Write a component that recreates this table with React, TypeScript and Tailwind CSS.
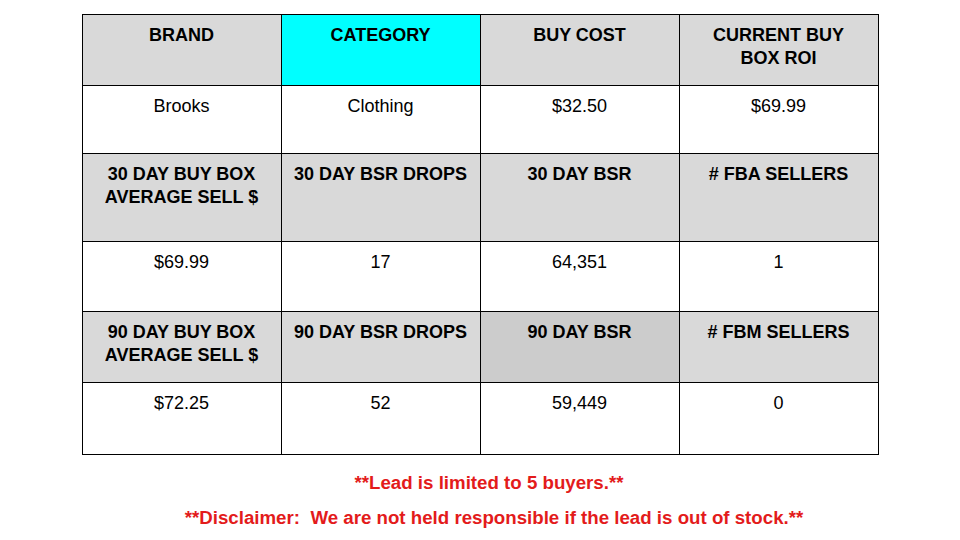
const font = { fontFamily: '"Liberation Sans", Arial, sans-serif' };

interface Cell {
  text: string;
  bg?: string;
}

const rows: { header: boolean; height: string; cells: Cell[] }[] = [
  {
    header: true,
    height: "h-[71px]",
    cells: [
      { text: "BRAND" },
      { text: "CATEGORY", bg: "bg-[#00ffff]" },
      { text: "BUY COST" },
      { text: "CURRENT BUY\nBOX ROI" },
    ],
  },
  {
    header: false,
    height: "h-[68px]",
    cells: [{ text: "Brooks" }, { text: "Clothing" }, { text: "$32.50" }, { text: "$69.99" }],
  },
  {
    header: true,
    height: "h-[88px]",
    cells: [
      { text: "30 DAY BUY BOX AVERAGE SELL $" },
      { text: "30 DAY BSR DROPS" },
      { text: "30 DAY BSR" },
      { text: "# FBA SELLERS" },
    ],
  },
  {
    header: false,
    height: "h-[70px]",
    cells: [{ text: "$69.99" }, { text: "17" }, { text: "64,351" }, { text: "1" }],
  },
  {
    header: true,
    height: "h-[71px]",
    cells: [
      { text: "90 DAY BUY BOX AVERAGE SELL $" },
      { text: "90 DAY BSR DROPS" },
      { text: "90 DAY BSR", bg: "bg-[#cccccc]" },
      { text: "# FBM SELLERS" },
    ],
  },
  {
    header: false,
    height: "h-[72px]",
    cells: [{ text: "$72.25" }, { text: "52" }, { text: "59,449" }, { text: "0" }],
  },
];

export default function App() {
  return (
    <div className="w-[960px] h-[540px] bg-white overflow-hidden" style={font}>
      <div className="pt-[14px] flex flex-col items-center">
        <table className="w-[797px] border-collapse table-fixed text-[18px] leading-[23px] text-black">
          <tbody>
            {rows.map((row, i) => (
              <tr key={i} className={row.height}>
                {row.cells.map((cell, j) => (
                  <td
                    key={j}
                    className={`border border-black align-top text-center px-[6px] pt-[9px] whitespace-pre-line ${
                      cell.bg ?? (row.header ? "bg-[#d9d9d9]" : "bg-white")
                    } ${row.header ? "font-bold" : "font-normal"}`}
                  >
                    {cell.text}
                  </td>
                ))}
              </tr>
            ))}
          </tbody>
        </table>
        <div className="mt-[16px] flex flex-col items-center gap-[12px] text-[#e31b1b] font-bold text-[18.7px] leading-[23px]">
          <p className="pl-[18px]">**Lead is limited to 5 buyers.**</p>
          <p className="pl-[28px] whitespace-pre">**Disclaimer:  We are not held responsible if the lead is out of stock.**</p>
        </div>
      </div>
    </div>
  );
}
